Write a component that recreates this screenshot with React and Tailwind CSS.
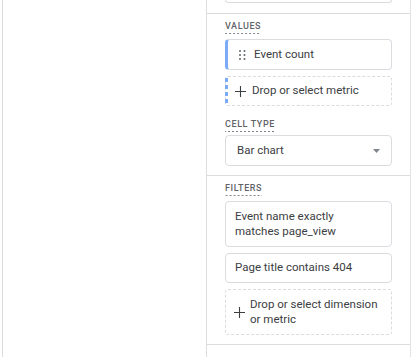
import React from "react";

const Label = ({ children, className = "" }) => (
  <div className={"flex " + className}>
    <span className="text-[9px] leading-[11px] tracking-[0.6px] uppercase text-[#5f6368] font-medium pb-[2px] bg-[linear-gradient(to_right,#80868b_50%,transparent_50%)] bg-[length:4px_1px] bg-repeat-x bg-bottom">
      {children}
    </span>
  </div>
);

const Plus = () => (
  <svg width="11" height="11" viewBox="0 0 11 11" className="shrink-0">
    <path d="M5.5 0V11M0 5.5H11" stroke="#3c4043" strokeWidth="1.1" fill="none" />
  </svg>
);

const Handle = () => (
  <svg width="7" height="10" viewBox="0 0 7 10" className="shrink-0">
    {[0, 1, 2].map((r) =>
      [0, 1].map((c) => (
        <circle key={r + "-" + c} cx={1 + c * 4.5} cy={1 + r * 4} r="1" fill="#5f6368" />
      ))
    )}
  </svg>
);

export default function App() {
  return (
    <div className="w-[416px] h-[357px] flex bg-white overflow-hidden text-[#3c4043]" style={{ fontFamily: "Roboto, 'Liberation Sans', sans-serif" }}>
      <div className="w-[2px] shrink-0" />
      <div className="w-[205px] shrink-0 border-l border-r border-[#dadce0]" />
      <div className="w-[204px] shrink-0 border-r border-[#e3e3e3] flex flex-col">
        <div className="h-[14px] border-b border-[#dadce0] px-[18px] shrink-0">
          <div className="h-[3px] border-x border-b border-[#dadce0] rounded-b-[4px]" />
        </div>
        <div className="px-[18px] pt-[7px] h-[162px] border-b border-[#dadce0] shrink-0">
          <Label>Values</Label>
          <div className="mt-[5px] h-[31px] rounded-[4px] border border-[#dadce0] border-l-[3px] border-l-[#7baaf7] flex items-center pl-[11px] gap-[8px] text-[11.5px]">
            <Handle />
            <span>Event count</span>
          </div>
          <div className="mt-[6px] h-[30px] rounded-[3px] border border-dashed border-[#dadce0] flex items-center relative pl-[9px] gap-[6px] text-[11.5px]">
            <div className="absolute left-[-1px] top-[1px] bottom-[1px] w-[3px] bg-[linear-gradient(to_bottom,#7baaf7_60%,transparent_60%)] bg-[length:3px_7px]" />
            <Plus />
            <span>Drop or select metric</span>
          </div>
          <Label className="mt-[13px]">Cell type</Label>
          <div className="mt-[3px] h-[31px] rounded-[4px] border border-[#dadce0] flex items-center justify-between pl-[11px] pr-[11px] text-[11.5px]">
            <span>Bar chart</span>
            <svg width="7" height="4" viewBox="0 0 7 4"><path d="M0 0H7L3.5 4Z" fill="#80868b" /></svg>
          </div>
        </div>
        <div className="px-[18px] pt-[7px] h-[169px] border-b border-[#dadce0] shrink-0">
          <Label>Filters</Label>
          <div className="mt-[5px] h-[46px] rounded-[4px] border border-[#dadce0] flex items-center px-[9px] text-[11.5px] leading-[15px]">
            <span>Event name exactly<br />matches page_view</span>
          </div>
          <div className="mt-[6px] h-[30px] rounded-[4px] border border-[#dadce0] flex items-center px-[9px] text-[11.5px]">
            <span>Page title contains 404</span>
          </div>
          <div className="mt-[6px] h-[46px] rounded-[3px] border border-dashed border-[#dadce0] flex items-center pl-[8px] gap-[5px] text-[11.5px] leading-[15px]">
            <Plus />
            <span>Drop or select dimension<br />or metric</span>
          </div>
        </div>
      </div>
      <div className="flex-1" />
    </div>
  );
}
